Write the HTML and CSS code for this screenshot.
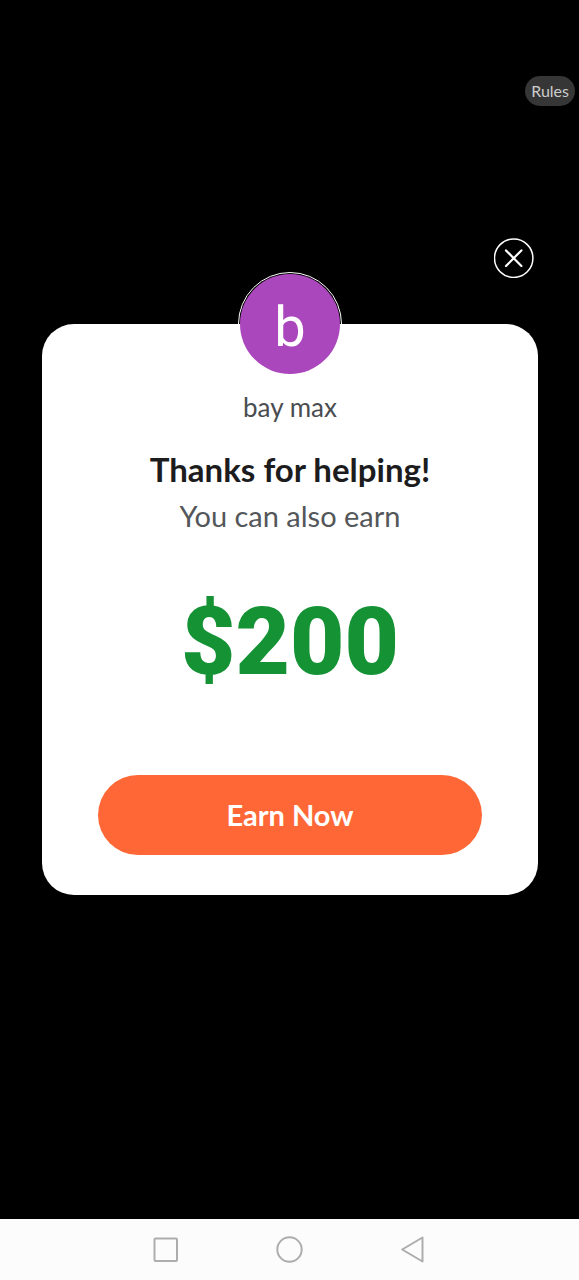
FILE: index.html
```html
<!DOCTYPE html>
<html lang="en">
<head>
<meta charset="utf-8">
<meta name="viewport" content="width=device-width, initial-scale=1">
<title>Thanks for helping!</title>
<link rel="stylesheet" href="styles.css">
</head>
<body>
<header class="top">
  <button class="rules" type="button">Rules</button>
</header>
<main class="dialog">
  <button class="close" type="button" aria-label="Close">
    <svg viewBox="0 0 40 40" fill="none" stroke="#fff" stroke-linecap="round"><circle cx="19.7" cy="20.2" r="19.2" stroke-width="1.5"/><path d="M12 12.4l15.4 15.6M27.4 12.4l-15.4 15.6" stroke-width="2.2"/></svg>
  </button>
  <section class="card">
    <div class="avatar">b</div>
    <p class="name">bay max</p>
    <h1 class="title">Thanks for helping!</h1>
    <p class="subtitle">You can also earn</p>
    <p class="amount">$200</p>
    <button class="earn" type="button">Earn Now</button>
  </section>
</main>
<nav class="system">
  <button class="key" type="button" aria-label="Recent apps">
    <svg viewBox="0 0 28 28"><rect x="2.5" y="2.5" width="22.5" height="22.5" rx="1"/></svg>
  </button>
  <button class="key" type="button" aria-label="Home">
    <svg viewBox="0 0 28 28"><circle cx="13.5" cy="13.5" r="12.2"/></svg>
  </button>
  <button class="key" type="button" aria-label="Back">
    <svg viewBox="0 0 28 28"><path d="M22.5 1.5v24L2.2 13.5z"/></svg>
  </button>
</nav>
</body>
</html>
```
FILE: styles.css
```css
* {
  box-sizing: border-box;
}

body {
  margin: 0;
  min-height: 100vh;
  display: flex;
  flex-direction: column;
  background: #000;
  font-family: Lato, "Liberation Sans", sans-serif;
}

button {
  border: 0;
  padding: 0;
  background: none;
  font-family: inherit;
}

svg {
  display: block;
  width: 100%;
}

.top {
  display: flex;
  justify-content: flex-end;
  padding: 76px 4px 0;
}

.rules {
  padding: 0 6px;
  border-radius: 16px;
  background: #363636;
  color: #ccc;
  font-size: 16px;
  line-height: 30px;
}

.dialog {
  flex: 1;
  display: flex;
  flex-direction: column;
  padding: 132px 41px 0 42px;
}

.close {
  align-self: flex-end;
  width: 40px;
  margin: 0 4px 46px;
}

.card {
  display: flex;
  flex-direction: column;
  align-items: center;
  padding: 0 56px 40px;
  border-radius: 32px;
  background: #fff;
  text-align: center;
}

.avatar {
  width: 104px;
  height: 104px;
  margin-top: -52px;
  padding: 1px;
  border: 1px solid #fff;
  border-radius: 50%;
  background: #ab47bc content-box;
  color: #fff;
  font: 400 56px/106px Roboto, sans-serif;
}

.name,
.title,
.subtitle,
.amount {
  margin: 0;
}

.name {
  margin-top: 15px;
  color: #4a4d50;
  font-size: 26px;
  line-height: 32px;
}

.title {
  margin-top: 24px;
  color: #1c1c1e;
  font-size: 33px;
  line-height: 44px;
}

.subtitle {
  margin-top: 5px;
  color: #54575a;
  font-size: 29px;
  line-height: 40px;
}

.amount {
  margin-top: 50px;
  color: #149234;
  font: 900 94px/112px Roboto, sans-serif;
}

.earn {
  width: 100%;
  margin-top: 77px;
  border-radius: 40px;
  background: #ff6836;
  color: #fff;
  font-size: 29px;
  font-weight: 700;
  line-height: 80px;
}

.system {
  display: flex;
  justify-content: center;
  gap: 96px;
  padding: 17px 0 16px;
  background: #fcfcfc;
}

.key {
  width: 28px;
}

.key svg {
  fill: none;
  stroke: #adadad;
  stroke-width: 2;
  stroke-linejoin: round;
}
```
